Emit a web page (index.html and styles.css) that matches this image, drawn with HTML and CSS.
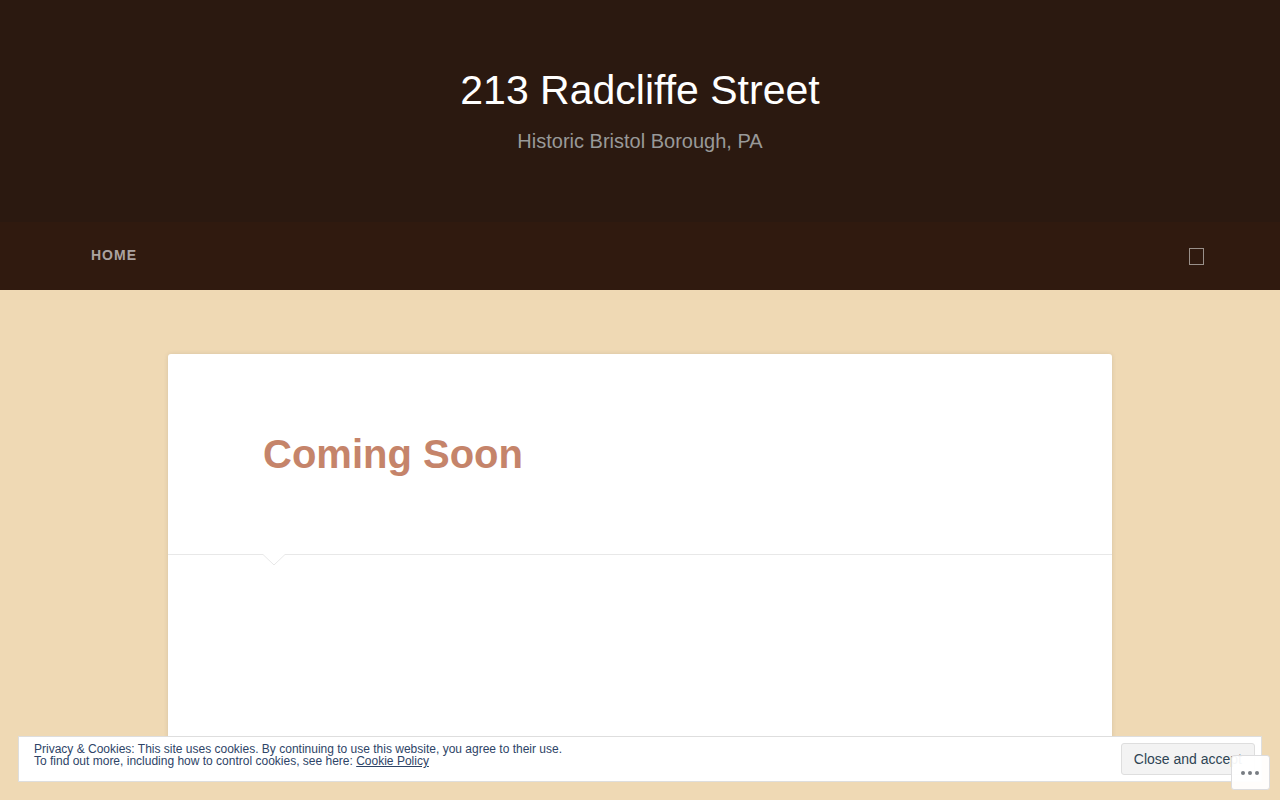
FILE: index.html
```html
<!DOCTYPE html>
<html lang="en">
<head>
  <meta charset="UTF-8" />
  <meta name="viewport" content="width=device-width, initial-scale=1.0"/>
  <title>213 Radcliffe Street</title>
  <link rel="stylesheet" href="styles.css">
</head>
<body>

  <header class="site-header">
    <h1 class="site-title"><a href="#">213 Radcliffe Street</a></h1>
    <p class="site-description">Historic Bristol Borough, PA</p>
  </header>

  <nav class="navigation">
    <div class="nav-inner">
      <a class="nav-link" href="#">Home</a>
      <button class="search-toggle" type="button" aria-label="Search">
        <svg width="15" height="17" viewBox="0 0 15 17" fill="none" stroke="currentColor">
          <rect x="0.5" y="0.5" width="14" height="16"/>
        </svg>
      </button>
    </div>
  </nav>

  <main class="content">
    <article class="post">
      <div class="post-header">
        <h2 class="post-title"><a href="#">Coming Soon</a></h2>
        <svg class="post-arrow" width="22" height="12" viewBox="0 0 22 12">
          <path d="M0 0H22V1L11 11.5L0 1Z" fill="#fff"/>
          <path d="M0 0.5L11 11L22 0.5" fill="none" stroke="#e8e8e8"/>
        </svg>
      </div>
    </article>
  </main>

  <!-- Cookie notice -->
  <div class="cookie-banner">
    <p class="cookie-text">
      Privacy &amp; Cookies: This site uses cookies. By continuing to use this website, you agree to their use.<br>
      To find out more, including how to control cookies, see here: <a href="#">Cookie Policy</a>
    </p>
    <button class="cookie-accept" type="button">Close and accept</button>
  </div>

  <button class="action-bar" type="button" aria-label="More">
    <svg width="18" height="4" viewBox="0 0 18 4" fill="currentColor">
      <circle cx="2" cy="2" r="2"/>
      <circle cx="9" cy="2" r="2"/>
      <circle cx="16" cy="2" r="2"/>
    </svg>
  </button>

</body>
</html>
```

FILE: styles.css
```css
* {
  margin: 0;
  padding: 0;
  box-sizing: border-box;
}

body {
  min-height: 100vh;
  display: flex;
  flex-direction: column;
  background: #efd9b4;
  font-family: "Liberation Sans", Arial, sans-serif;
  color: #444;
}

button {
  font-family: inherit;
  cursor: pointer;
}

/* Header */

.site-header {
  padding: 66px 20px 69px;
  background: #2b1910;
  text-align: center;
}

.site-title {
  font-size: 41px;
  line-height: 48px;
  font-weight: 400;
}

.site-title a {
  color: #fff;
  text-decoration: none;
}

.site-description {
  margin-top: 15px;
  font-size: 20px;
  line-height: 24px;
  color: #999;
}

/* Navigation */

.navigation {
  padding: 0 76px;
  background: #301a0f;
}

.nav-inner {
  display: flex;
  align-items: center;
  justify-content: space-between;
  height: 68px;
}

.nav-link {
  padding: 0 15px 2px;
  font-size: 14px;
  line-height: 20px;
  font-weight: 700;
  letter-spacing: 1px;
  text-transform: uppercase;
  text-decoration: none;
  color: #aba3a0;
}

.search-toggle {
  display: flex;
  border: 0;
  background: none;
  color: #99908a;
}

/* Post */

.content {
  flex: 1;
  display: flex;
  width: 100%;
  max-width: 984px;
  margin: 0 auto;
  padding: 64px 20px 40px;
}

.post {
  flex: 1;
  background: #fff;
  border-radius: 3px;
  box-shadow: 0 0 5px rgba(0, 0, 0, 0.1);
}

.post-header {
  position: relative;
  padding: 76px 95px;
  border-bottom: 1px solid #e8e8e8;
}

.post-title {
  font-size: 40px;
  line-height: 48px;
  font-weight: 700;
}

.post-title a {
  color: #c5846a;
  text-decoration: none;
}

.post-arrow {
  position: absolute;
  left: 95px;
  top: 100%;
}

/* Cookie notice */

.cookie-banner {
  position: fixed;
  left: 18px;
  right: 18px;
  bottom: 18px;
  display: flex;
  align-items: flex-start;
  justify-content: space-between;
  padding: 6px 6px 6px 15px;
  background: #fff;
  border: 1px solid #dedede;
  color: #2e4467;
}

.cookie-text {
  font-size: 12px;
  line-height: 12px;
}

.cookie-text a {
  color: inherit;
}

.cookie-accept {
  padding: 0 12px;
  background: #f3f3f3;
  border: 1px solid #dedede;
  border-radius: 3px;
  font-size: 14px;
  line-height: 30px;
  color: #2e4453;
}

.action-bar {
  position: fixed;
  right: 10px;
  bottom: 10px;
  display: flex;
  align-items: center;
  justify-content: center;
  width: 39px;
  height: 35px;
  padding-right: 1px;
  background: rgba(255, 255, 255, 0.95);
  border: 1px solid #dcdcde;
  border-radius: 3px;
  color: #787c82;
}
```
